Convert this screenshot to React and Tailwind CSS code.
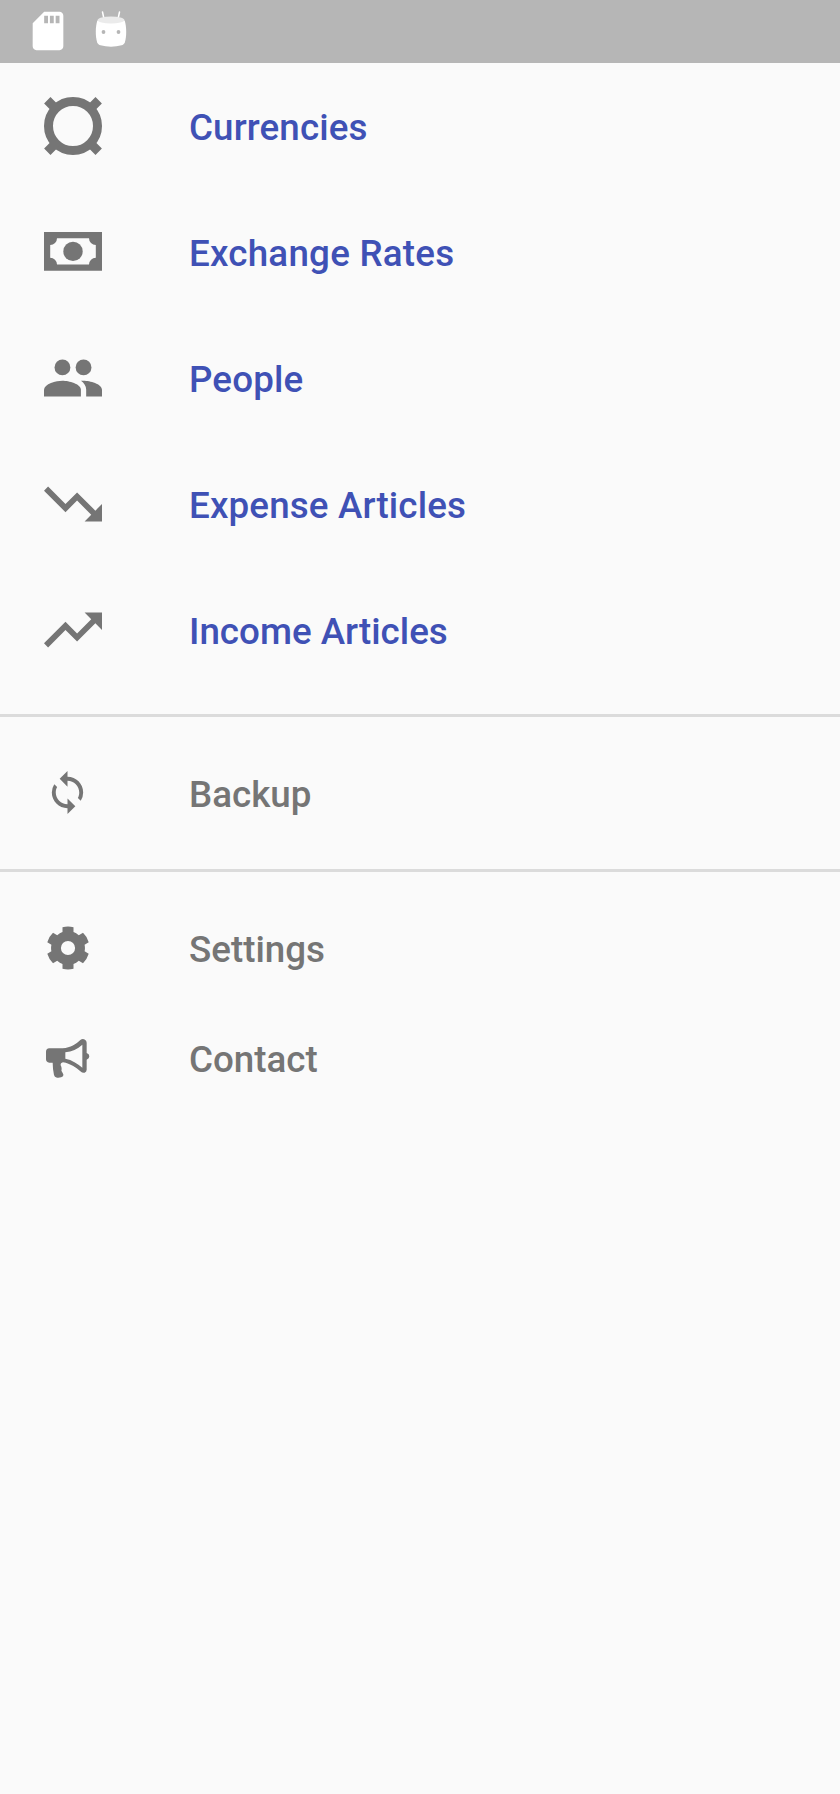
import React from 'react';
import { MdSync, MdSdCard } from 'react-icons/md';

function CurrencyIcon() {
  return (
    <svg viewBox="0 0 58 58" className="size-[58px]" fill="none" stroke="currentColor">
      <circle cx="29" cy="29" r="24.5" strokeWidth="9" />
      <path d="M3.3 3.3 12 12M54.7 3.3 46 12M3.3 54.7 12 46M54.7 54.7 46 46" strokeWidth="9" />
    </svg>
  );
}

function BanknoteIcon() {
  return (
    <svg viewBox="0 0 58 39" className="h-[39px] w-[58px]" fill="currentColor">
      <path
        fillRule="evenodd"
        d="M0 0H58V38.8H0ZM13 6.2A6.8 6.8 0 0 1 6.2 13V25.800A6.8 6.8 0 0 1 13 32.500H45A6.8 6.8 0 0 1 51.800 25.800V13A6.8 6.8 0 0 1 45 6.200Z"
      />
      <circle cx="29" cy="19.4" r="9.7" />
    </svg>
  );
}

function PeopleIcon() {
  return (
    <svg viewBox="1 1 22 22" className="size-[58px]" fill="currentColor">
      <circle cx="16" cy="8" r="3" />
      <circle cx="8" cy="8" r="3" />
      <path d="M8 13c-2.33 0-7 1.17-7 3.5V19h14v-2.5c0-2.33-4.67-3.5-7-3.5z" />
      <path d="M16 13c-.29 0-.62.02-.97.05 1.16.84 1.97 1.97 1.97 3.450V19h6v-2.5c0-2.33-4.67-3.5-7-3.5z" />
    </svg>
  );
}

function TrendingDownIcon() {
  return (
    <svg viewBox="2 2 20 20" className="size-[58px]" fill="currentColor">
      <path d="M16 18l2.29-2.29-4.88-4.88-4 4L2 7.41 3.41 6l6 6 4-4 6.3 6.29L22 12v6z" />
    </svg>
  );
}

function TrendingUpIcon() {
  return (
    <svg viewBox="2 2 20 20" className="size-[58px]" fill="currentColor">
      <path d="M16 6l2.29 2.29-4.88 4.88-4-4L2 16.59 3.41 18l6-6 4 4 6.3-6.29L22 12V6z" />
    </svg>
  );
}

function GearIcon() {
  return (
    <svg viewBox="-22 -22 44 44" className="ml-[2px] size-[44px]" fill="currentColor">
      <path
        fillRule="evenodd"
        d="M-5.5 -20.8Q0 -22.2 5.5 -20.8V-16Q8.2 -15 10.8 -12.8L15 -15.2Q19 -11.5 20.7 -5.8L16.6 -3.3Q17.3 0 16.6 3.3L20.7 5.8Q19 11.5 15 15.2L10.8 12.8Q8.2 15 5.5 16V20.8Q0 22.2 -5.5 20.8V16Q-8.2 15 -10.8 12.8L-15 15.2Q-19 11.5 -20.7 5.8L-16.6 3.3Q-17.3 0 -16.6 -3.3L-20.7 -5.8Q-19 -11.5 -15 -15.2L-10.8 -12.8Q-8.2 -15 -5.5 -16ZM7.1 0A7.1 7.1 0 1 0 -7.1 0A7.1 7.1 0 1 0 7.1 0Z"
      />
    </svg>
  );
}

function MegaphoneIcon() {
  return (
    <svg viewBox="18 21 132 120" className="ml-[2px] h-[40px] w-[44px]" fill="currentColor">
      <path
        fillRule="evenodd"
        d="M28 52H68C92 50 108 40 121 27Q128 21 135 26Q140 29 140 35V66Q148 69 148 75.5Q148 82 140 86V116Q140 122 134 125Q128 127 121 121C107 109 92 98 69 94Q61 96 62 103Q65 108 65 114Q62 119 68 126Q72 131 69 136Q64 141 51 140Q43 139 42 132Q38 112 38 95H28Q18 94 18 85V62Q18 53 28 52ZM76 64V83C96 87 112 97 127 110V41C112 54 96 62 76 64Z"
      />
    </svg>
  );
}

function RobotIcon() {
  return (
    <svg viewBox="0 0 32 38" className="h-[38px] w-8">
      <path d="M7.5 2 9 9M24.5 2 23 9" stroke="#fff" strokeWidth="1.5" strokeLinecap="round" />
      <path d="M2.3 10.5C.4 17 .2 26 2.2 32.5 2.8 34.2 4 34.8 5.5 35.3 12 37.2 20 37.2 26.5 35.3 28 34.8 29.2 34.2 29.8 32.5 31.8 26 31.6 17 29.7 10.5Z" fill="#fff" />
      <ellipse cx="16" cy="10" rx="13.3" ry="3.6" fill="#ebebeb" />
      <circle cx="8.5" cy="22" r="1.9" fill="#b6b6b6" />
      <circle cx="23.5" cy="22" r="1.9" fill="#b6b6b6" />
    </svg>
  );
}

const primary = [
  { label: 'Currencies', tracking: 'tracking-[0.12px]', icon: <CurrencyIcon /> },
  { label: 'Exchange Rates', tracking: 'tracking-[0.22px]', icon: <BanknoteIcon /> },
  { label: 'People', tracking: 'tracking-[0.15px]', icon: <PeopleIcon /> },
  { label: 'Expense Articles', tracking: 'tracking-[0.14px]', icon: <TrendingDownIcon /> },
  { label: 'Income Articles', tracking: 'tracking-normal', icon: <TrendingUpIcon /> },
];

function Item({ icon, label, large, tracking = 'tracking-normal' }) {
  return (
    <li className={`flex items-center pl-11 ${large ? 'h-[126px] text-[#3f51b5]' : 'h-[110px] text-[#757575]'}`}>
      <span className="flex w-[145px] shrink-0 items-center pb-px text-[#757575]">{icon}</span>
      <span className={`pt-[2px] text-[36.75px] leading-[43px] font-medium ${tracking}`}>{label}</span>
    </li>
  );
}

export default function App() {
  return (
    <div className="flex h-[1794px] w-[840px] flex-col bg-[#fafafa] font-['Roboto',sans-serif]">
      <header className="flex h-[63px] shrink-0 items-start bg-[#b6b6b6] pl-[24.5px] text-white">
        <MdSdCard className="mt-2 size-[46px]" />
        <span className="mt-[9.5px] ml-6">
          <RobotIcon />
        </span>
      </header>
      <nav>
        <ul className="pb-[21px]">
          {primary.map((item) => (
            <Item key={item.label} large {...item} />
          ))}
        </ul>
        <ul className="border-y-3 border-[#dbdbdb] py-[21px]">
          <Item label="Backup" icon={<MdSync className="size-[47px]" />} />
        </ul>
        <ul className="pt-[21px]">
          <Item label="Settings" icon={<GearIcon />} />
          <Item label="Contact" icon={<MegaphoneIcon />} />
        </ul>
      </nav>
    </div>
  );
}
